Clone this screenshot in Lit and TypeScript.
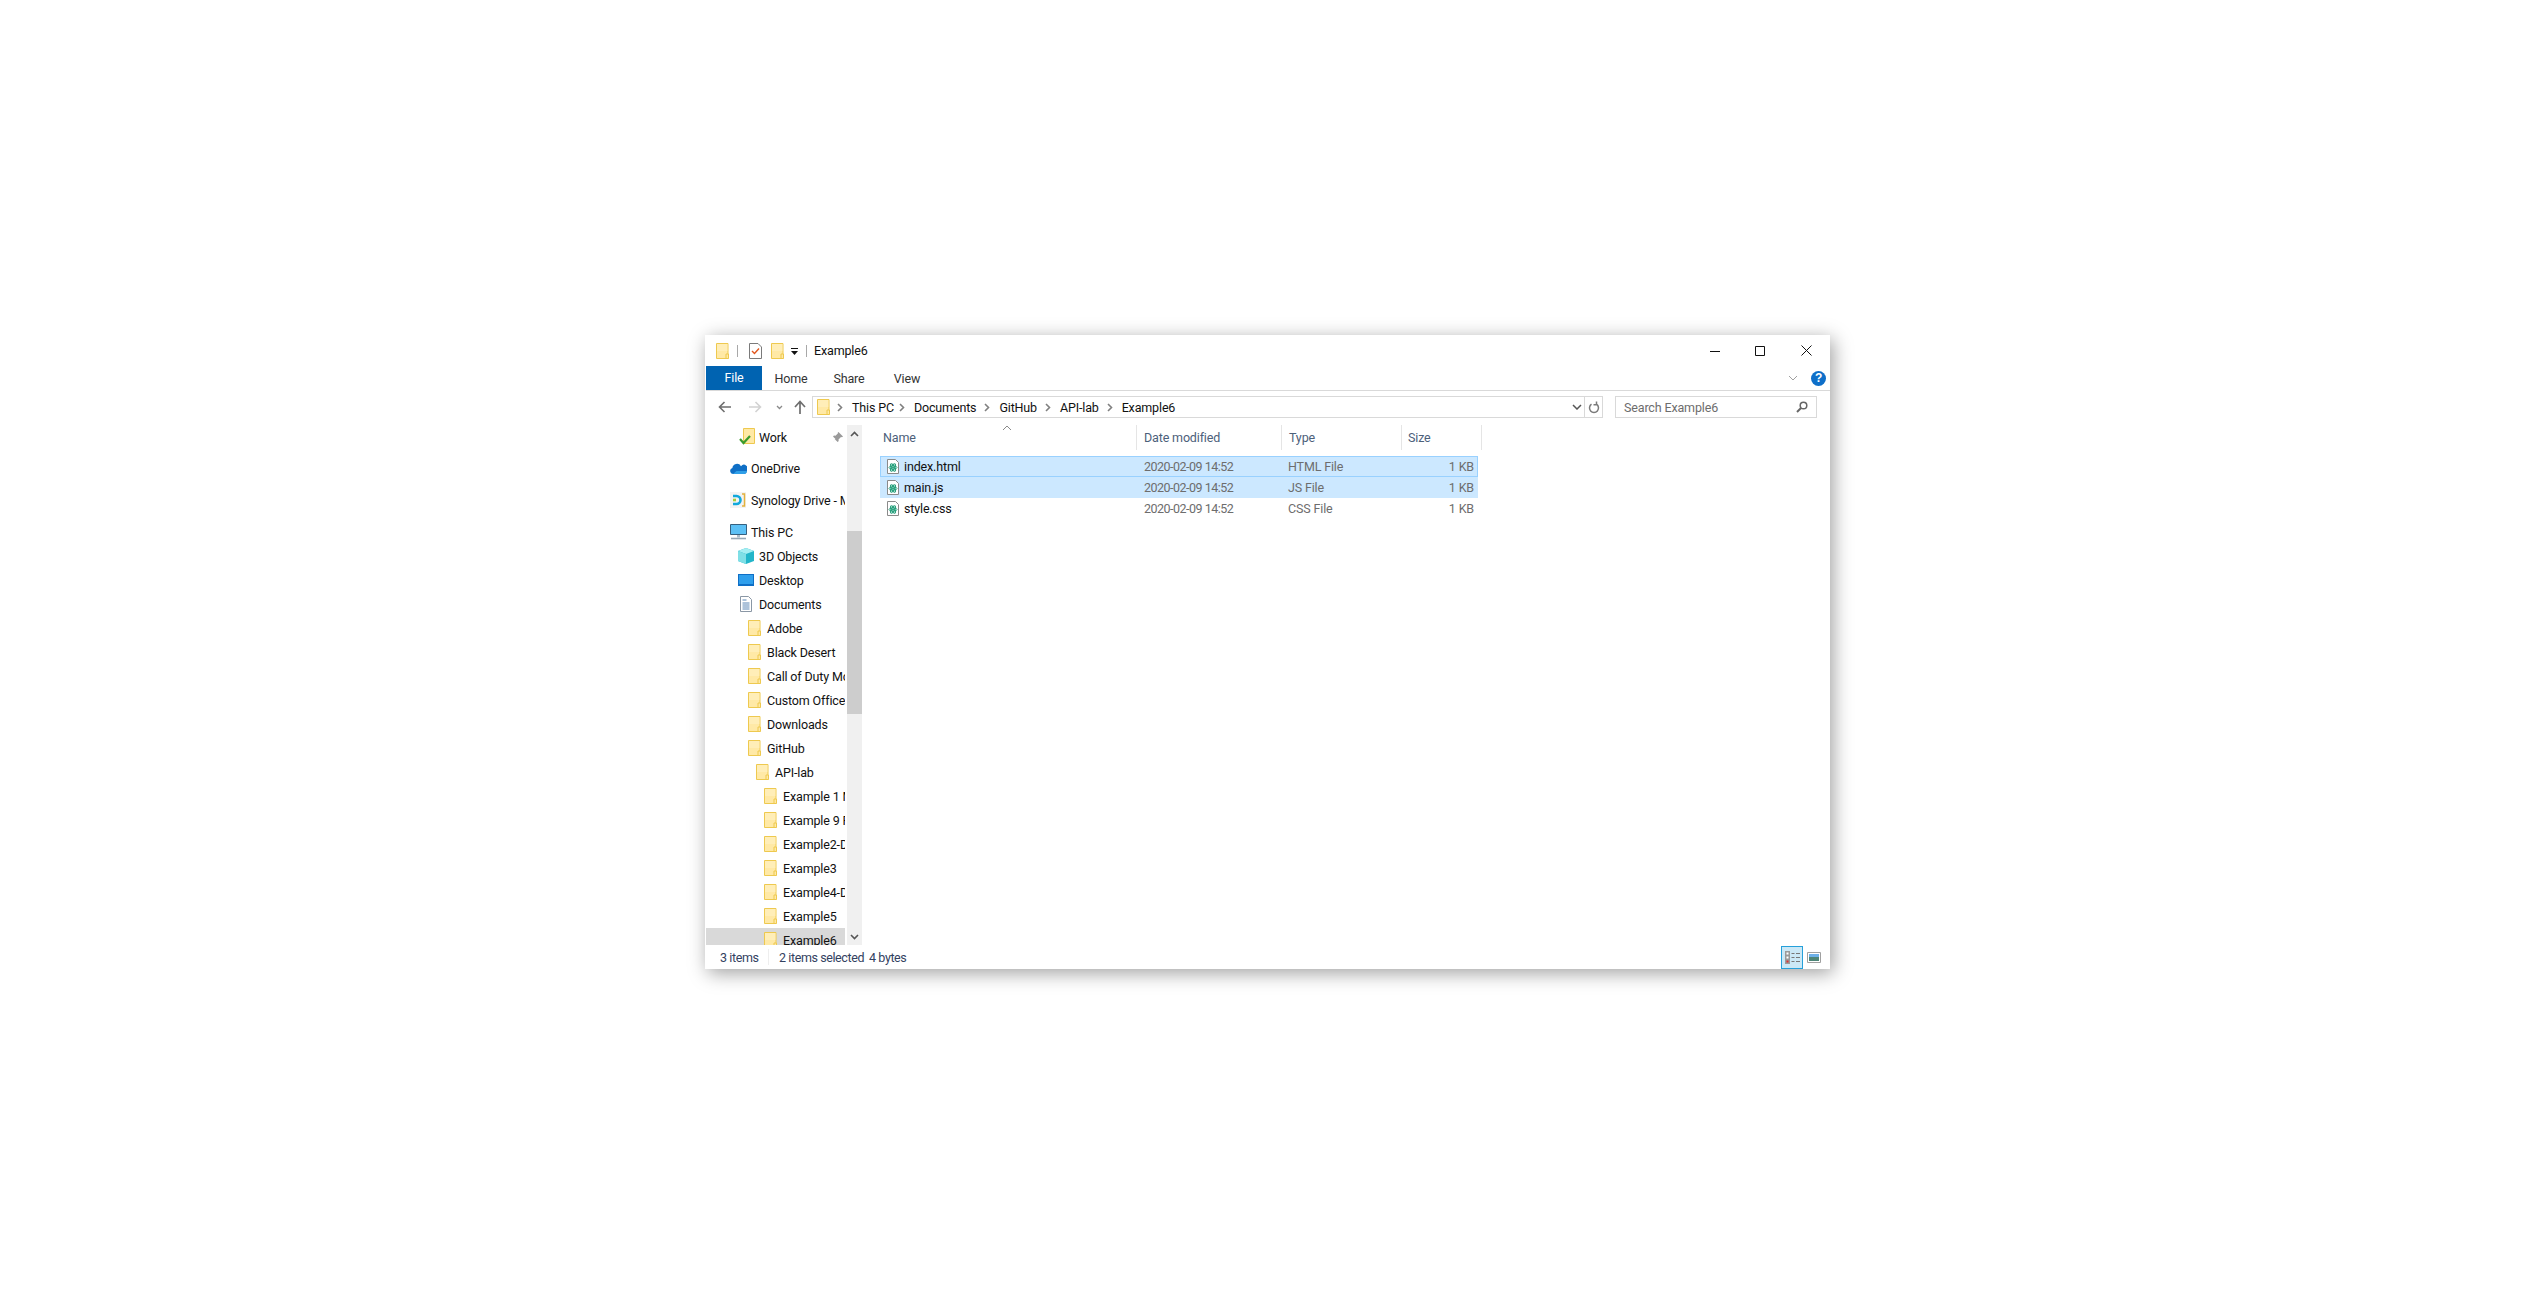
import { LitElement, html, css } from "lit";
import { customElement } from "lit/decorators.js";

const folder = () => html`<svg class="ic" width="13" height="16" viewBox="0 0 13 16"><path d="M.5.5h11.500v15H.5z" fill="#ffe9a6" stroke="#eec94f"/><path d="M1 1h10.500v7H1z" fill="#fff0c0" opacity=".7"/><path d="M10 11h2.500v4.500H10z" fill="#ffe9a6" stroke="#eec94f"/></svg>`;
const chev = () => html`<svg class="chev" width="6" height="9" viewBox="0 0 6 9"><path d="M1 1l3.500 3.500L1 8" fill="none" stroke="#808080" stroke-width="1.600"/></svg>`;
const fileIcon = () => html`<svg class="ic" width="12" height="15" viewBox="0 0 12 15"><path d="M.5.500h8l3 3v11H.5z" fill="#fff" stroke="#8a8a8a"/><g fill="none" stroke="#1f9d78" stroke-width="1"><ellipse cx="6" cy="8.500" rx="4" ry="1.700"/><ellipse cx="6" cy="8.500" rx="4" ry="1.700" transform="rotate(60 6 8.500)"/><ellipse cx="6" cy="8.500" rx="4" ry="1.700" transform="rotate(120 6 8.500)"/></g><circle cx="6" cy="8.500" r="1" fill="#1f9d78"/></svg>`;

const navIcons: Record<string, unknown> = {
  work: html`<svg class="ic" width="18" height="18" viewBox="0 0 18 18"><path d="M4.500.5h11v15h-11z" fill="#ffe9a6" stroke="#eec94f"/><path d="M1 11l3.500 4L11 8" fill="none" stroke="#3b9c2c" stroke-width="2.200"/></svg>`,
  cloud: html`<svg class="ic" width="17" height="11" viewBox="0 0 17 11"><path d="M3 11a3 3 0 0 1-.6-5.900A4.600 4.600 0 0 1 11 3.200 3.600 3.600 0 0 1 16.800 8c0 1.800-1.200 3-3 3z" fill="#0f6fc6"/><path d="M3 11h11c1.800 0 2.800-1.200 2.800-3H6.500z" fill="#2f9fe8"/></svg>`,
  syn: html`<svg class="ic" width="16" height="16" viewBox="0 0 16 16"><path d="M0 0h16v16H0z" fill="#f3f3f3"/><path d="M3 4h3.500a4 4 0 0 1 0 8H3" fill="none" stroke="#11a8dc" stroke-width="2.600"/><path d="M3 8h3" stroke="#a6cf38" stroke-width="2.600"/><path d="M12 2h2.500v12H12" fill="none" stroke="#e3b23c" stroke-width="1.500"/></svg>`,
  pc: html`<svg class="ic" width="17" height="16" viewBox="0 0 17 16"><path d="M.5.500h16v10H.5z" fill="#5cc0f5" stroke="#36607f"/><path d="M7 11h3v2.500H7z" fill="#a9bdcc"/><path d="M1 14.500h15" stroke="#97a8b6" stroke-width="1.600"/></svg>`,
  obj: html`<svg class="ic" width="16" height="16" viewBox="0 0 16 16"><path d="M8 0l8 3v10l-8 3-8-3V3z" fill="#22b5c9"/><path d="M0 3l8 3 8-3-8-3z" fill="#a5eef2"/><path d="M0 3l8 3v10l-8-3z" fill="#7fdfe6"/></svg>`,
  desk: html`<svg class="ic" width="16" height="12" viewBox="0 0 16 12"><path d="M0 0h16v12H0z" fill="#0f6fc6"/><path d="M1 1h14v9H1z" fill="#2f9fec"/></svg>`,
  docs: html`<svg class="ic" width="12" height="16" viewBox="0 0 12 16"><path d="M.5.500h8l3 3v12H.5z" fill="#fff" stroke="#8a97a5"/><path d="M2.500 4h4M2.500 7h7M2.500 9h7M2.500 11h7M2.500 13h7" stroke="#5a86b5"/></svg>`,
};

const nav: { t: string; x: number; ico: string; m: number; sel?: boolean }[] = [
  { t: "3D Objects", x: 32, ico: "obj", m: 5 },
  { t: "Desktop", x: 32, ico: "desk", m: 5 },
  { t: "Documents", x: 34, ico: "docs", m: 7 },
  { t: "Adobe", x: 42, ico: "", m: 6 },
  { t: "Black Desert", x: 42, ico: "", m: 6 },
  { t: "Call of Duty Modern Warfare", x: 42, ico: "", m: 6 },
  { t: "Custom Office Templates", x: 42, ico: "", m: 6 },
  { t: "Downloads", x: 42, ico: "", m: 6 },
  { t: "GitHub", x: 42, ico: "", m: 6 },
  { t: "API-lab", x: 50, ico: "", m: 6 },
  { t: "Example 1 Maps", x: 58, ico: "", m: 6 },
  { t: "Example 9 React", x: 58, ico: "", m: 6 },
  { t: "Example2-Data", x: 58, ico: "", m: 6 },
  { t: "Example3", x: 58, ico: "", m: 6 },
  { t: "Example4-Data", x: 58, ico: "", m: 6 },
  { t: "Example5", x: 58, ico: "", m: 6 },
  { t: "Example6", x: 58, ico: "", m: 6, sel: true },
];
const files = [
  { n: "index.html", ty: "HTML File", c: "sel focus" },
  { n: "main.js", ty: "JS File", c: "sel" },
  { n: "style.css", ty: "CSS File", c: "" },
];

@customElement("app-root")
export class AppRoot extends LitElement {
  static styles = css`
    :host { display: block; width: 2540px; height: 1293px; position: relative; background: #fff; overflow: hidden;
      font-family: Roboto, "Noto Sans", sans-serif; font-size: 12.5px; letter-spacing: -0.15px; color: #111; }
    .ic { display: block; flex: none; }
    .chev { display: block; flex: none; }
    .win { position: absolute; left: 705px; top: 335px; width: 1125px; height: 634px; background: #fff;
      display: flex; flex-direction: column; box-shadow: 3px 4px 18px rgba(0,0,0,.38); }
    .title { height: 31px; display: flex; align-items: center; flex: none; padding: 0 1px 0 11px; }
    .vsep { width: 1px; height: 12px; background: #a8a8a8; flex: none; }
    .ttext { margin-left: 7px; flex: 1; }
    .wbtn { width: 46px; display: flex; justify-content: center; flex: none; }
    .wbtn.mn { width: 44px; }
    .tabs { height: 24px; display: flex; align-items: center; border-bottom: 1px solid #d9d9d9; margin-left: 1px; flex: none; color: #333; }
    .tab { width: 58px; text-align: center; }
    .tab.file { width: 56px; height: 24px; line-height: 24px; background: #0063b1; color: #fff; }
    .tabs .sp { flex: 1; }
    .help { width: 15px; height: 15px; border-radius: 50%; background: #0e6fc9; color: #fff; font: bold 12px/15px "Liberation Sans", sans-serif; text-align: center; margin: 0 4px 0 13px; }
    .addr { height: 22px; margin-top: 5px; display: flex; align-items: center; flex: none; }
    .nbtns { width: 107px; display: flex; align-items: center; flex: none; padding-left: 13px; box-sizing: border-box; }
    .abox { width: 791px; height: 22px; box-sizing: border-box; border: 1px solid #d9d9d9; display: flex; align-items: center; flex: none; padding-left: 4px; }
    .abox span { margin: 0 8px 0 9px; white-space: nowrap; }
    .abox span.pc { margin-right: 5px; }
    .abox .grow { flex: 1; }
    .abox .dd { margin-right: 2px; }
    .abox .rf { width: 17px; height: 20px; border-left: 1px solid #d9d9d9; display: flex; align-items: center; justify-content: center; }
    .search { width: 202px; height: 22px; margin-left: 12px; box-sizing: border-box; border: 1px solid #d9d9d9; display: flex; align-items: center; justify-content: space-between; padding: 0 8px; color: #6d6d6d; flex: none; }
    .main { flex: 1; min-height: 0; display: flex; margin-top: 7px; }
    .nav { width: 139px; margin-left: 1px; overflow: hidden; flex: none; position: relative; }
    .navgap { width: 2px; flex: none; }
    .row { height: 24px; display: flex; align-items: center; white-space: nowrap; overflow: hidden; }
    .row.sel { background: #d9d9d9; }
    .gap { height: 8px; }
    .gap.g7 { height: 7px; }
    .pin { margin-left: auto; margin-right: 2px; }
    .sb { width: 15px; background: #f0f0f0; flex: none; display: flex; flex-direction: column; align-items: center; margin-right: 1px; }
    .sb .ar { height: 17px; display: flex; align-items: center; flex: none; }
    .sb .tr { flex: 1; align-self: stretch; display: flex; flex-direction: column; padding-top: 89px; padding-bottom: 214px; box-sizing: border-box; min-height: 0; }
    .sb .th { flex: 1; background: #cdcdcd; }
    .list { flex: 1; padding-left: 17px; position: relative; }
    .head { height: 25px; display: flex; margin-bottom: 6px; color: #4c607a; }
    .hc { border-right: 1px solid #e5e5e5; box-sizing: border-box; display: flex; align-items: center; flex: none; padding-left: 3px; }
    .hc.c { padding-left: 7px; }
    .hc.c.w4 { padding-left: 6px; }
    .w1 { width: 257px; } .w2 { width: 145px; } .w3 { width: 120px; } .w4 { width: 80px; }
    .sort { position: absolute; left: 139px; top: 0; }
    .frow { height: 21px; width: 598px; display: flex; align-items: center; }
    .frow.sel { background: #cce8ff; }
    .frow.focus { box-shadow: inset 0 0 0 1px #99d1ff; }
    .cname { width: 264px; display: flex; align-items: center; padding-left: 7px; box-sizing: border-box; flex: none; }
    .cname span { margin-left: 5px; }
    .cdate { width: 144px; color: #6d6d6d; flex: none; letter-spacing: -0.5px; }
    .ctype { width: 140px; color: #6d6d6d; flex: none; }
    .csize { flex: 1; text-align: right; padding-right: 4px; color: #6d6d6d; }
    .status { height: 24px; display: flex; align-items: center; flex: none; color: #33415f; padding-left: 15px; white-space: nowrap; letter-spacing: -0.4px; }
    .status .s1 { width: 48px; }
    .status .ssep { width: 1px; height: 16px; background: #eee; margin-right: 10px; }
    .status .s2 { width: 90px; }
    .views { margin-left: auto; display: flex; align-items: center; margin-right: 9px; }
    .vb { width: 22px; height: 23px; box-sizing: border-box; border: 1px solid #26a0da; background: #cbe8f6; display: flex; align-items: center; justify-content: center; margin-right: 4px; }
    .s-title-a { margin: 0 11px 0 8px; }
    .sp9 { width: 9px; flex: none; }
    .sp7 { width: 7px; flex: none; }
    .ddarrow { margin: 2px 8px 0 7px; }
    .fw { margin-left: 16px; } .dn { margin-left: 14px; } .up { margin-left: 11px; }
    .wt { margin-left: 2px; } .od { margin-left: 4px; } .sy { margin-left: 5px; }
    .p33 { padding-left: 33px; } .p24 { padding-left: 24px; }
  `;

  render() {
    return html`<div class="win">
      <div class="title">
        ${folder()}
        <div class="vsep s-title-a"></div>
        <svg class="ic" width="13" height="16" viewBox="0 0 13 16"><path d="M.5.500h8.500l3.500 3.500v11.500H.5z" fill="#fff" stroke="#7a7a7a"/><path d="M3 8l2.500 2.500L10 5.500" fill="none" stroke="#e2571e" stroke-width="1.400"/></svg>
        <div class="sp9"></div>
        ${folder()}
        <svg class="ic ddarrow" width="7" height="8" viewBox="0 0 7 8"><path d="M0 0h7v1H0zM0 3h7L3.500 7z" fill="#111"/></svg>
        <div class="vsep"></div>
        <div class="ttext">Example6</div>
        <div class="wbtn mn"><svg width="10" height="10" viewBox="0 0 10 10"><path d="M0 5.500h10" stroke="#111"/></svg></div>
        <div class="wbtn"><svg width="10" height="10" viewBox="0 0 10 10"><path d="M.5.500h9v9h-9z" fill="none" stroke="#111"/></svg></div>
        <div class="wbtn"><svg width="11" height="11" viewBox="0 0 11 11"><path d="M.5.500l10 10M10.500.500l-10 10" stroke="#111"/></svg></div>
      </div>
      <div class="tabs">
        <div class="tab file">File</div><div class="tab">Home</div><div class="tab">Share</div><div class="tab">View</div>
        <div class="sp"></div>
        <svg width="10" height="6" viewBox="0 0 10 6"><path d="M1 1l4 4 4-4" fill="none" stroke="#a0a0a0"/></svg>
        <div class="help">?</div>
      </div>
      <div class="addr">
        <div class="nbtns">
          <svg class="ic" width="14" height="12" viewBox="0 0 14 12"><path d="M13 6H2M6.500 1L1.500 6l5 5" fill="none" stroke="#6e6e6e" stroke-width="1.600"/></svg>
          <svg class="ic fw" width="14" height="12" viewBox="0 0 14 12"><path d="M1 6h11M7.500 1l5 5-5 5" fill="none" stroke="#d2d2d2" stroke-width="1.600"/></svg>
          <svg class="ic dn" width="7" height="5" viewBox="0 0 7 5"><path d="M1 1l2.500 2.500L6 1" fill="none" stroke="#8a8a8a" stroke-width="1.300"/></svg>
          <svg class="ic up" width="12" height="14" viewBox="0 0 12 14"><path d="M6 14V2M1 7l5-5.500L11 7" fill="none" stroke="#6e6e6e" stroke-width="1.700"/></svg>
        </div>
        <div class="abox">
          ${folder()}
          <div class="sp7"></div>
          ${chev()}<span class="pc">This PC</span>${chev()}<span>Documents</span>${chev()}<span>GitHub</span>${chev()}<span>API-lab</span>${chev()}<span>Example6</span>
          <div class="grow"></div>
          <svg class="dd" width="10" height="6" viewBox="0 0 10 6"><path d="M1 1l4 4 4-4" fill="none" stroke="#555" stroke-width="1.500"/></svg>
          <div class="rf"><svg width="12" height="13" viewBox="0 0 12 13"><path d="M8.500 3.200A4.500 4.500 0 1 1 3.500 3.200M8.500 .5v3.200H5.500" fill="none" stroke="#7a7a7a" stroke-width="1.500"/></svg></div>
        </div>
        <div class="search">Search Example6
          <svg width="12" height="12" viewBox="0 0 12 12"><circle cx="7.500" cy="4.500" r="3.300" fill="none" stroke="#666" stroke-width="1.500"/><path d="M5 7l-4 4" stroke="#666" stroke-width="2"/></svg>
        </div>
      </div>
      <div class="main">
        <div class="nav">
          <div class="row p33">${navIcons.work}<span class="wt">Work</span>
            <svg class="pin" width="11" height="11" viewBox="0 0 11 11"><path d="M6.500 0l4.500 4.500-1 .8-1-.3-2.500 2.500.2 1.500-1 1L3 7.500 0 11l3.500-4L1 4.500l1-1 1.500.2L6 1.200 5.700.8z" fill="#9a9a9a"/></svg>
          </div>
          <div class="gap g7"></div>
          <div class="row p24">${navIcons.cloud}<span class="od">OneDrive</span></div>
          <div class="gap"></div>
          <div class="row p24">${navIcons.syn}<span class="sy">Synology Drive - Michael</span></div>
          <div class="gap"></div>
          <div class="row p24">${navIcons.pc}<span class="od">This PC</span></div>
          ${nav.map((n) => html`<div class="row ${n.sel ? "sel" : ""}" style="padding-left:${n.x}px">
            ${n.ico ? navIcons[n.ico] : folder()}<span style="margin-left:${n.m}px">${n.t}</span></div>`)}
        </div>
        <div class="navgap"></div>
        <div class="sb">
          <div class="ar"><svg width="9" height="6" viewBox="0 0 9 6"><path d="M1 5l3.500-3.500L8 5" fill="none" stroke="#555" stroke-width="1.600"/></svg></div>
          <div class="tr"><div class="th"></div></div>
          <div class="ar"><svg width="9" height="6" viewBox="0 0 9 6"><path d="M1 1l3.500 3.500L8 1" fill="none" stroke="#555" stroke-width="1.600"/></svg></div>
        </div>
        <div class="list">
          <svg class="sort" width="10" height="6" viewBox="0 0 10 6"><path d="M1 5l4-4 4 4" fill="none" stroke="#8a8a8a"/></svg>
          <div class="head">
            <div class="hc w1">Name</div>
            <div class="hc c w2">Date modified</div>
            <div class="hc c w3">Type</div>
            <div class="hc c w4">Size</div>
          </div>
          ${files.map((f) => html`<div class="frow ${f.c}">
            <div class="cname">${fileIcon()}<span>${f.n}</span></div>
            <div class="cdate">2020-02-09 14:52</div>
            <div class="ctype">${f.ty}</div>
            <div class="csize">1 KB</div>
          </div>`)}
        </div>
      </div>
      <div class="status">
        <div class="s1">3 items</div><div class="ssep"></div>
        <div class="s2">2 items selected</div><div>4 bytes</div>
        <div class="views">
          <div class="vb"><svg width="15" height="13" viewBox="0 0 15 13"><path d="M0 0h5v13H0z" fill="#9a9a9a"/><path d="M1.500 1.500h2v2h-2zM1.500 5.500h2v2h-2z" fill="#fff"/><path d="M1.500 9.500h2v2h-2z" fill="#d33"/><path d="M6.500 2.500h3M11 2.500h4M6.500 6.500h3M11 6.500h4M6.500 10.500h3M11 10.500h4" stroke="#777"/></svg></div>
          <svg width="14" height="11" viewBox="0 0 14 11"><path d="M.5.500h13v10H.5z" fill="#fff" stroke="#a0a0a0"/><path d="M2 2h10v3H2z" fill="#6db0e8"/><path d="M2 5h10v4H2z" fill="#4d8577"/></svg>
        </div>
      </div>
    </div>`;
  }
}
